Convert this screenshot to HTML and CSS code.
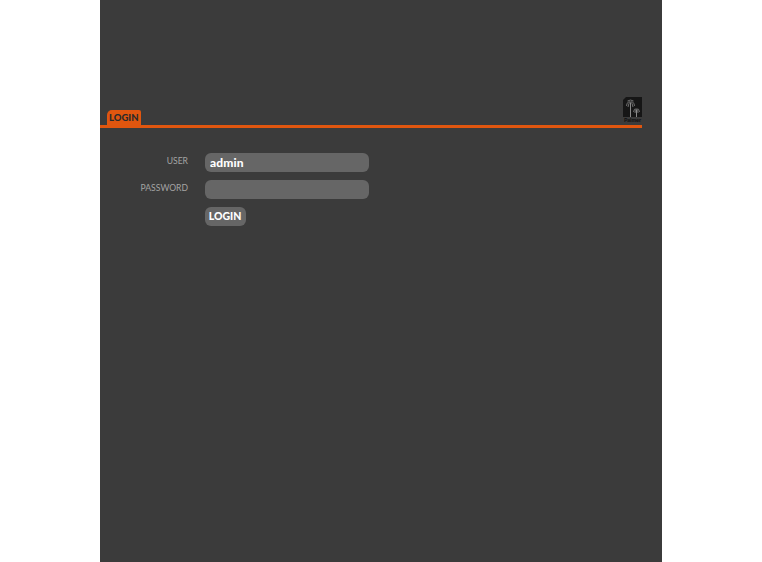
FILE: index.html
```html
<!DOCTYPE html>
<html lang="en">

<head>
  <meta charset="UTF-8" />
  <title>Login</title>
  <link rel="stylesheet" href="styles.css">
</head>

<body>
  <div class="page">
    <div class="header">
      <div class="tab">LOGIN</div>
      <div class="logo">
        <svg class="logo-mark" width="19" height="20" viewBox="0 0 19 20">
          <path d="M3 0H19V20H0V3Z" fill="#161616" />
          <path d="M7.500 6V20" fill="none" stroke="#8a8a8a" stroke-width="1" />
          <path d="M3.500 9Q4 4 7.500 5Q11 4 11.500 9M5 10Q5.500 6 7.500 5Q9.500 6 10 10M4.500 4Q7.500 2 10.500 4" fill="none" stroke="#6e6e6e" stroke-width="1" />
          <path d="M13.500 13V20" fill="none" stroke="#8a8a8a" stroke-width="1" />
          <path d="M10.500 15Q11 11 13.500 12Q16 11 16.500 15M12 16Q12 13 13.500 12Q15 13 15 16" fill="none" stroke="#6e6e6e" stroke-width="1" />
        </svg>
        <span class="logo-text">Palmer</span>
      </div>
    </div>
    <form class="login-form">
      <label class="field-label" for="user">USER</label>
      <input class="field-input" type="text" id="user" value="admin" />
      <label class="field-label" for="password">PASSWORD</label>
      <input class="field-input" type="password" id="password" />
      <button class="login-btn" type="submit">LOGIN</button>
    </form>
  </div>
</body>

</html>
```

FILE: styles.css
```css
* {
  box-sizing: border-box;
}

html,
body {
  margin: 0;
  padding: 0;
  height: 100%;
  background: #fff;
  font-family: Lato, "Liberation Sans", sans-serif;
}

.page {
  width: 562px;
  height: 562px;
  margin-left: 100px;
  padding-top: 97px;
  background: #3b3b3b;
  overflow: hidden;
}

.header {
  display: flex;
  justify-content: space-between;
  align-items: flex-end;
  width: 542px;
  height: 31px;
  padding-left: 7px;
  border-bottom: 3px solid #e0560f;
}

.tab {
  width: 34px;
  height: 15px;
  padding-left: 2px;
  border-radius: 5px 2px 0 0;
  background: #e0560f;
  color: #2a2a2a;
  font-size: 9.500px;
  font-weight: 900;
  line-height: 15px;
}

.logo {
  display: flex;
  flex-direction: column;
  align-items: center;
  width: 19px;
  height: 28px;
  margin-bottom: -3px;
  align-self: flex-start;
}

.logo-mark {
  display: block;
  flex: none;
}

.logo-text {
  color: #111;
  font-size: 5.500px;
  font-weight: 900;
  line-height: 7px;
}

.login-form {
  display: grid;
  grid-template-columns: 88px 164.500px;
  grid-auto-rows: 19px;
  column-gap: 16.500px;
  row-gap: 8px;
  align-items: center;
  padding-top: 24.500px;
}

.field-label {
  margin-top: -2px;
  color: #a3a3a3;
  font-size: 8.600px;
  text-align: right;
}

.field-input {
  width: 164.500px;
  height: 19px;
  padding: 0 5.500px;
  border: none;
  border-radius: 6px;
  outline: none;
  background: #666;
  color: #fff;
  font-family: Lato, "Liberation Sans", sans-serif;
  font-size: 12px;
  font-weight: 900;
  letter-spacing: 0.100px;
}

.login-btn {
  grid-column: 2;
  width: 41px;
  height: 19px;
  padding: 0;
  border: none;
  border-radius: 6px;
  background: #666;
  color: #fff;
  font-family: Lato, "Liberation Sans", sans-serif;
  font-size: 10.500px;
  font-weight: 900;
}
```
